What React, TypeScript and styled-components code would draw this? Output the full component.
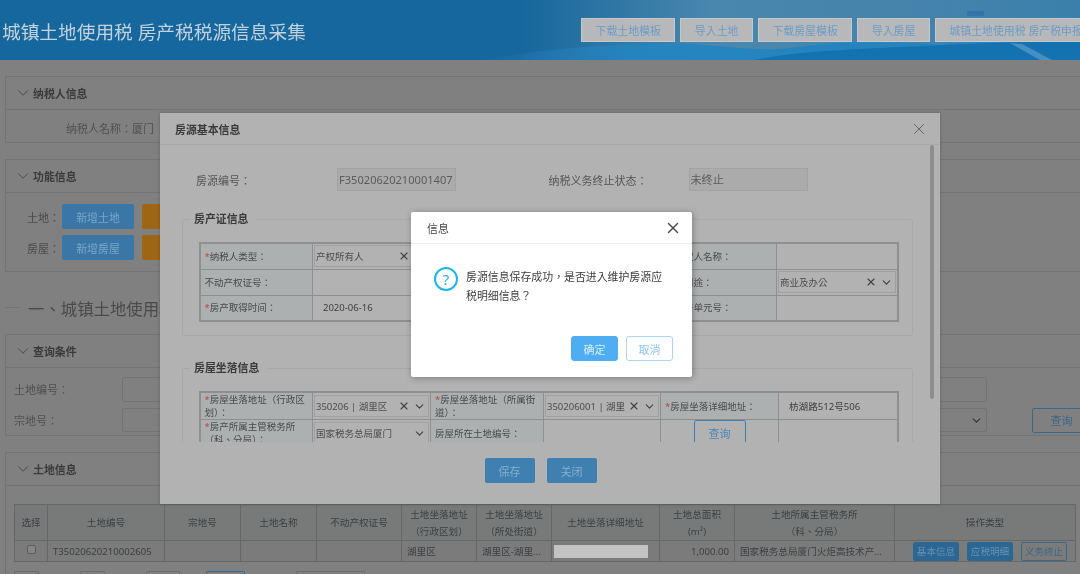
import React, { FC } from 'react';
import styled, { createGlobalStyle } from 'styled-components';
import { ChevronDown, X } from 'lucide-react';

const GlobalStyle = createGlobalStyle`
    html, body {
        margin: 0;
        padding: 0;
        width: 1080px;
        height: 574px;
        overflow: hidden;
        background: #808080;
        font-family: "Noto Sans", "Noto Sans CJK TC", sans-serif;
    }
    * {
        box-sizing: border-box;
    }
`;

const Screen = styled.div`
    position: relative;
    width: 1080px;
    height: 574px;
    overflow: hidden;
    background: #808080;
    filter: blur(0.35px);
`;

// ---------- top bar ----------

const TopBar = styled.header`
    position: relative;
    display: flex;
    align-items: center;
    height: 60px;
    overflow: hidden;
    background: linear-gradient(90deg, #16679d 0, #16679d 48%, #4a87ae 66%, #4583ab 85%, #3a80ac 100%);
`;

const WaveArt = styled.svg`
    position: absolute;
    left: 480px;
    top: 0;
`;

const AppTitle = styled.h1`
    position: relative;
    flex: 0 0 581px;
    margin: 0;
    padding-left: 2px;
    font-size: 18.7px;
    font-weight: 400;
    color: #c3d2dc;
    white-space: nowrap;
`;

const TopActions = styled.div`
    position: relative;
    display: flex;
    gap: 5px;
`;

const TopButton = styled.button`
    flex-shrink: 0;
    height: 24.5px;
    padding: 0 13.5px;
    border: 1px solid #c4c8cb;
    background: #b6b8ba;
    color: #6f9cc5;
    font: inherit;
    font-size: 10.9px;
    white-space: nowrap;
`;

// ---------- page behind the dialogs ----------

const Content = styled.main`
    padding-left: 5px;
    margin-right: -5px;
`;

const Panel = styled.section<{ $top: number; $height: number }>`
    margin-top: ${ p => p.$top }px;
    height: ${ p => p.$height }px;
    border: 1px solid #747474;
    background: #808080;
`;

const PanelHead = styled.div`
    display: flex;
    align-items: center;
    gap: 1.5px;
    height: 33px;
    padding-left: 7.5px;
    border-bottom: 1px solid #747474;
    color: #3a3a3a;
    font-size: 10.9px;
    font-weight: 700;
`;

const PayerLine = styled.div`
    padding: 10px 0 0 60px;
    color: #505050;
    font-size: 11px;
    white-space: nowrap;
`;

const FuncBody = styled.div`
    display: flex;
    flex-direction: column;
    gap: 6px;
    padding: 11px 0 0 21px;
`;

const FuncRow = styled.div`
    display: flex;
    align-items: center;
`;

const FuncLabel = styled.span`
    width: 35px;
    color: #4a4a4a;
    font-size: 11px;
    white-space: nowrap;
`;

const FuncButton = styled.button<{ $orange?: boolean }>`
    width: 72px;
    height: 25px;
    margin-left: ${ p => p.$orange ? '7.5px' : '0' };
    border: 0;
    border-radius: 2px;
    background: ${ p => p.$orange ? '#9e6614' : '#3a76a6' };
    color: #7aa7c8;
    font: inherit;
    font-size: 10.9px;
`;

const SectionTitle = styled.div`
    display: flex;
    align-items: center;
    gap: 8px;
    height: 62px;
    padding-top: 9px;
    color: #4a4a4a;
    font-size: 16.4px;
    white-space: nowrap;

    &::before {
        content: '';
        width: 15px;
        height: 1px;
        background: #747474;
    }
`;

const QueryBody = styled.div`
    display: flex;
    flex-direction: column;
    gap: 6px;
    padding: 9px 0 0 8px;
`;

const QueryRow = styled.div`
    display: flex;
    align-items: center;
    color: #4f4f4f;
    font-size: 11px;
`;

const QueryLabel = styled.span`
    width: 108px;
    flex-shrink: 0;
`;

const QueryInput = styled.div`
    flex-shrink: 0;
    display: flex;
    align-items: center;
    justify-content: flex-end;
    width: 864.5px;
    height: 24.5px;
    padding-right: 3px;
    border: 1px solid #747474;
    border-radius: 2px;
    color: #333;
`;

const QueryButton = styled.button`
    flex-shrink: 0;
    width: 60px;
    height: 25px;
    margin-left: 45px;
    border: 1px solid #3a678a;
    border-radius: 2px;
    background: transparent;
    color: #3a678a;
    font: inherit;
    font-size: 11px;
`;

const LandBody = styled.div`
    padding: 18px 0 0 8px;
`;

const LandTable = styled.table`
    width: 1061px;
    table-layout: fixed;
    border-collapse: collapse;
    border: 1px solid #656565;
    font-size: 9.6px;
    color: #3c4043;

    th, td {
        border: 1px solid #676767;
    }
    th {
        height: 36px;
        padding: 0 2px;
        background: #787a7a;
        font-weight: 400;
        line-height: 17px;
    }
    td {
        height: 21px;
        padding: 0 5px;
        background: #7b7b7b;
        white-space: nowrap;
        overflow: hidden;
        text-overflow: ellipsis;
    }
`;

const Check = styled.span`
    display: block;
    width: 9px;
    height: 9px;
    margin: 0 auto 3px;
    border: 1px solid #5d5d5d;
    border-radius: 2px;
    background: #858585;
`;

const MaskedAddress = styled.span`
    display: block;
    width: 94px;
    height: 13px;
    margin-left: -3px;
    background: #c3c3c3;
`;

const Amount = styled.td`
    && {
        text-align: right;
    }
`;

const RowActions = styled.div`
    display: flex;
    justify-content: flex-end;
    gap: 8px;
    margin-right: 3px;
`;

const RowButton = styled.button<{ $outline?: boolean }>`
    width: 46px;
    height: 19px;
    padding: 0;
    border: 1px solid ${ p => p.$outline ? '#3a678a' : '#2c6794' };
    border-radius: 2px;
    background: ${ p => p.$outline ? 'transparent' : '#2c6794' };
    color: ${ p => p.$outline ? '#3a678a' : '#6492b3' };
    font: inherit;
    font-size: 9.6px;
`;

const Pager = styled.div`
    display: flex;
    margin-top: 9px;
`;

const PagerBox = styled.span<{ $w: number; $gap: number; $active?: boolean }>`
    width: ${ p => p.$w }px;
    height: 24px;
    margin-left: ${ p => p.$gap }px;
    border: 1px solid ${ p => p.$active ? '#3a678a' : '#6c6c6c' };
    border-radius: 2px;
`;

// ---------- house source modal ----------

const Modal = styled.div`
    position: absolute;
    left: 160px;
    top: 113px;
    width: 780px;
    height: 391px;
    background: #b2b2b2;
    box-shadow: 0 0 3px rgba(0, 0, 0, 0.25);
`;

const ModalHead = styled.div`
    display: flex;
    align-items: center;
    justify-content: space-between;
    height: 32px;
    padding: 0 12px 0 15px;
    border-bottom: 1px solid #a9a9a9;
    color: #3a3a3a;
    font-size: 10.9px;
    font-weight: 700;
    svg {
        color: #4c4c4c;
    }
`;

const ModalBody = styled.div`
    height: 297px;
    padding-top: 23px;
    overflow: hidden;
`;

const ScrollThumb = styled.span`
    position: absolute;
    left: 770px;
    top: 32px;
    width: 4px;
    height: 254px;
    border-radius: 2px;
    background: #8d8d8d;
`;

const InfoRow = styled.div`
    display: flex;
    align-items: center;
    padding-left: 36px;
    color: #565656;
    font-size: 11px;
`;

const InfoLabel = styled.span<{ $w: number }>`
    width: ${ p => p.$w }px;
    flex-shrink: 0;
`;

const ReadOnly = styled.div`
    width: 119px;
    height: 23px;
    margin-right: 92.5px;
    padding-left: 1px;
    border: 1px solid #a3a3a3;
    background: #ababab;
    color: #5c5c5c;
    font-size: 11.1px;
    line-height: 21px;
    white-space: nowrap;
`;

const Group = styled.fieldset<{ $top: number; $height: number }>`
    width: 731px;
    height: ${ p => p.$height }px;
    margin: ${ p => p.$top }px 0 0 22px;
    padding: 14px 15.5px 0;
    border: 1px solid #a8a8a8;
    border-radius: 3px;
    min-width: 0;
`;

const GroupTitle = styled.legend`
    height: 18px;
    padding: 0 8px 0 4px;
    margin-left: -8.5px;
    color: #3a3a3a;
    font-size: 10.9px;
    font-weight: 700;
    line-height: 18px;
`;

const FormTable = styled.table`
    width: 698px;
    table-layout: fixed;
    border-collapse: collapse;
    border: 2px solid #8f8f8f;
    font-size: 9.5px;
    color: #4a4a4a;
    line-height: 13px;
`;

const Cell = styled.td<{ $label?: boolean; $center?: boolean }>`
    height: 26px;
    padding: ${ p => p.$label ? '0 4px' : p.$center ? '0 1px' : '1px' };
    border: 1px solid #8f8f8f;
    background: ${ p => p.$label ? '#acb0b1' : 'transparent' };
    text-align: ${ p => p.$center ? 'center' : 'left' };
    white-space: ${ p => p.$label ? 'normal' : 'nowrap' };
    overflow: hidden;
    vertical-align: ${ p => p.$center ? 'top' : 'middle' };
`;

const Star = styled.span`
    color: #b8433f;
`;

const SelectBox = styled.div`
    display: flex;
    align-items: center;
    gap: 3px;
    height: 22px;
    padding: 0 2px 0 1px;
    border: 1px solid #a0a0a0;
    color: #4c4c4c;
    svg {
        flex-shrink: 0;
        color: #404040;
    }
`;

const SelectText = styled.span`
    flex: 1;
    overflow: hidden;
`;

const PlainValue = styled.div`
    padding-left: 9px;
    color: #404040;
`;

const AddressValue = styled(PlainValue)`
    font-size: 9.6px;
`;

const CellButton = styled.button`
    display: block;
    width: 52px;
    height: 26px;
    margin: 0 auto;
    border: 1px solid #3f80b0;
    border-radius: 2px;
    background: transparent;
    color: #4a87b3;
    font: inherit;
    font-size: 11px;
`;

const ModalFoot = styled.div`
    display: flex;
    justify-content: center;
    gap: 12px;
    padding: 16px 19px 0 0;
`;

const FootButton = styled.button`
    width: 50px;
    height: 25px;
    border: 0;
    border-radius: 2px;
    background: #3f80b0;
    color: #86b0cf;
    font: inherit;
    font-size: 11px;
`;

// ---------- confirm dialog ----------

const Dialog = styled.div`
    position: absolute;
    left: 411px;
    top: 212px;
    display: flex;
    flex-direction: column;
    width: 281px;
    height: 165px;
    border-radius: 2px;
    background: #fff;
    box-shadow: 1px 1px 6px rgba(0, 0, 0, 0.3);
`;

const DialogHead = styled.div`
    display: flex;
    align-items: center;
    justify-content: space-between;
    height: 32px;
    padding: 0 10px 0 16px;
    border-bottom: 1px solid #eee;
    color: #444;
    font-size: 10.9px;
    svg {
        color: #4a4a52;
    }
`;

const DialogBody = styled.div`
    display: flex;
    gap: 8px;
    padding: 23px 0 0 23px;
`;

const QuestionIcon = styled.span`
    flex-shrink: 0;
    display: flex;
    align-items: center;
    justify-content: center;
    width: 24px;
    height: 24px;
    border: 2px solid #1cb8ec;
    border-radius: 50%;
    color: #1cb8ec;
    font-size: 15px;
`;

const DialogText = styled.p`
    width: 200px;
    margin: 0;
    color: #3c3c3c;
    font-size: 10.9px;
    line-height: 19px;
`;

const DialogActions = styled.div`
    display: flex;
    justify-content: flex-end;
    gap: 8px;
    margin-top: auto;
    padding: 0 19px 16px 0;
`;

const DialogButton = styled.button<{ $primary?: boolean }>`
    width: 47px;
    height: 25px;
    border: 1px solid ${ p => p.$primary ? '#4faef3' : '#a9d5f7' };
    border-radius: 3px;
    background: ${ p => p.$primary ? '#4faef3' : '#fff' };
    color: ${ p => p.$primary ? '#d8eefc' : '#8cc6f3' };
    font: inherit;
    font-size: 11px;
`;

// #################################################################################

const Caret: FC = () => <ChevronDown size={ 13 } strokeWidth={ 2 } />;
const Clear: FC = () => <X size={ 12 } strokeWidth={ 2.2 } />;
const PanelCaret: FC = () => <ChevronDown size={ 18 } strokeWidth={ 1 } />;

const Columns: FC<{ widths: number[] }> = ({ widths }) => (
    <colgroup>
        { widths.map( ( w, i ) => <col key={ i } width={ w } /> ) }
    </colgroup>
);

const App: FC = () => (
    <Screen>
        <GlobalStyle />
        <TopBar>
            <WaveArt width={ 600 } height={ 60 } viewBox='0 0 600 60'>
                <defs>
                    <linearGradient id='sea' x1='0' y1='0' x2='1' y2='0'>
                        <stop offset='0' stopColor='#2384c0' stopOpacity='0' />
                        <stop offset='0.25' stopColor='#2384c0' stopOpacity='0.9' />
                        <stop offset='1' stopColor='#2384c0' />
                    </linearGradient>
                </defs>
                <path d='M0 60 C60 50 130 42 210 44 C250 46 280 52 310 48 C360 40 400 42 460 44 L600 36 L600 60 Z' fill='url(#sea)' />
                <path d='M275 60 C310 52 360 50 420 47 C480 44 540 42 600 40 L600 60 Z' fill='#136fae' opacity='0.85' />
                <path d='M530 43 L542 44 L572 60 L560 60 Z' fill='#6ea9cf' opacity='0.55' />
                <rect x={ 487 } y={ 11 } width={ 17 } height={ 5 } fill='#2a70a8' opacity='0.7' />
            </WaveArt>
            <AppTitle>城镇土地使用税 房产税税源信息采集</AppTitle>
            <TopActions>
                <TopButton>下载土地模板</TopButton>
                <TopButton>导入土地</TopButton>
                <TopButton>下载房屋模板</TopButton>
                <TopButton>导入房屋</TopButton>
                <TopButton>城镇土地使用税 房产税申报</TopButton>
            </TopActions>
        </TopBar>

        <Content>
            <Panel $top={ 16 } $height={ 67 }>
                <PanelHead><PanelCaret />纳税人信息</PanelHead>
                <PayerLine>纳税人名称：厦门</PayerLine>
            </Panel>
            <Panel $top={ 16 } $height={ 113 }>
                <PanelHead><PanelCaret />功能信息</PanelHead>
                <FuncBody>
                    <FuncRow>
                        <FuncLabel>土地：</FuncLabel>
                        <FuncButton>新增土地</FuncButton>
                        <FuncButton $orange />
                    </FuncRow>
                    <FuncRow>
                        <FuncLabel>房屋：</FuncLabel>
                        <FuncButton>新增房屋</FuncButton>
                        <FuncButton $orange />
                    </FuncRow>
                </FuncBody>
            </Panel>
            <SectionTitle>一、城镇土地使用税</SectionTitle>
            <Panel $top={ 0 } $height={ 102 }>
                <PanelHead><PanelCaret />查询条件</PanelHead>
                <QueryBody>
                    <QueryRow>
                        <QueryLabel>土地编号：</QueryLabel>
                        <QueryInput />
                    </QueryRow>
                    <QueryRow>
                        <QueryLabel>宗地号：</QueryLabel>
                        <QueryInput><Caret /></QueryInput>
                        <QueryButton>查询</QueryButton>
                    </QueryRow>
                </QueryBody>
            </Panel>
            <Panel $top={ 16 } $height={ 160 }>
                <PanelHead><PanelCaret />土地信息</PanelHead>
                <LandBody>
                    <LandTable>
                        <Columns widths={ [ 33, 117, 76, 76, 85, 75, 75, 108, 75, 160, 181 ] } />
                        <thead>
                            <tr>
                                <th>选择</th>
                                <th>土地编号</th>
                                <th>宗地号</th>
                                <th>土地名称</th>
                                <th>不动产权证号</th>
                                <th>土地坐落地址<br />（行政区划）</th>
                                <th>土地坐落地址<br />（所处街道）</th>
                                <th>土地坐落详细地址</th>
                                <th>土地总面积<br />(m²)</th>
                                <th>土地所属主管税务所<br />（科、分局）</th>
                                <th>操作类型</th>
                            </tr>
                        </thead>
                        <tbody>
                            <tr>
                                <td><Check /></td>
                                <td>T35020620210002605</td>
                                <td />
                                <td />
                                <td />
                                <td>湖里区</td>
                                <td>湖里区-湖里...</td>
                                <td><MaskedAddress /></td>
                                <Amount>1,000.00</Amount>
                                <td>国家税务总局厦门火炬高技术产业...</td>
                                <td>
                                    <RowActions>
                                        <RowButton>基本信息</RowButton>
                                        <RowButton>应税明细</RowButton>
                                        <RowButton $outline>义务终止</RowButton>
                                    </RowActions>
                                </td>
                            </tr>
                        </tbody>
                    </LandTable>
                    <Pager>
                        <PagerBox $w={ 25 } $gap={ 0 } />
                        <PagerBox $w={ 25 } $gap={ 41 } />
                        <PagerBox $w={ 34 } $gap={ 41 } />
                        <PagerBox $w={ 39 } $gap={ 26 } $active />
                        <PagerBox $w={ 69 } $gap={ 51 } />
                    </Pager>
                </LandBody>
            </Panel>
        </Content>

        <Modal>
            <ModalHead>
                房源基本信息
                <X size={ 18 } strokeWidth={ 1 } />
            </ModalHead>
            <ModalBody>
                <InfoRow>
                    <InfoLabel $w={ 141 }>房源编号：</InfoLabel>
                    <ReadOnly>F35020620210001407</ReadOnly>
                    <InfoLabel $w={ 140 }>纳税义务终止状态：</InfoLabel>
                    <ReadOnly>未终止</ReadOnly>
                </InfoRow>

                <Group $top={ 19 } $height={ 126 }>
                    <GroupTitle>房产证信息</GroupTitle>
                    <FormTable>
                        <Columns widths={ [ 113, 118, 113, 117, 116, 121 ] } />
                        <tbody>
                            <tr>
                                <Cell $label><Star>*</Star>纳税人类型：</Cell>
                                <Cell><SelectBox><SelectText>产权所有人</SelectText><Clear /><Caret /></SelectBox></Cell>
                                <Cell $label />
                                <Cell />
                                <Cell $label>共有权人名称：</Cell>
                                <Cell />
                            </tr>
                            <tr>
                                <Cell $label>不动产权证号：</Cell>
                                <Cell />
                                <Cell $label />
                                <Cell />
                                <Cell $label>房屋用途：</Cell>
                                <Cell><SelectBox><SelectText>商业及办公</SelectText><Clear /><Caret /></SelectBox></Cell>
                            </tr>
                            <tr>
                                <Cell $label><Star>*</Star>房产取得时间：</Cell>
                                <Cell><PlainValue>2020-06-16</PlainValue></Cell>
                                <Cell $label />
                                <Cell />
                                <Cell $label>不动产单元号：</Cell>
                                <Cell />
                            </tr>
                        </tbody>
                    </FormTable>
                </Group>

                <Group $top={ 23 } $height={ 120 }>
                    <GroupTitle>房屋坐落信息</GroupTitle>
                    <FormTable>
                        <Columns widths={ [ 113, 118, 113, 117, 118, 119 ] } />
                        <tbody>
                            <tr>
                                <Cell $label><Star>*</Star>房屋坐落地址（行政区划）：</Cell>
                                <Cell><SelectBox><SelectText>350206 | 湖里区</SelectText><Clear /><Caret /></SelectBox></Cell>
                                <Cell $label><Star>*</Star>房屋坐落地址（所属街道）：</Cell>
                                <Cell><SelectBox><SelectText>350206001 | 湖里</SelectText><Clear /><Caret /></SelectBox></Cell>
                                <Cell $label><Star>*</Star>房屋坐落详细地址：</Cell>
                                <Cell><AddressValue>枋湖路512号506</AddressValue></Cell>
                            </tr>
                            <tr>
                                <Cell $label><Star>*</Star>房产所属主管税务所（科、分局）：</Cell>
                                <Cell><SelectBox><SelectText>国家税务总局厦门</SelectText><Caret /></SelectBox></Cell>
                                <Cell $label>房屋所在土地编号：</Cell>
                                <Cell />
                                <Cell $center><CellButton>查询</CellButton></Cell>
                                <Cell />
                            </tr>
                        </tbody>
                    </FormTable>
                </Group>
            </ModalBody>
            <ModalFoot>
                <FootButton>保存</FootButton>
                <FootButton>关闭</FootButton>
            </ModalFoot>
            <ScrollThumb />
        </Modal>

        <Dialog>
            <DialogHead>
                信息
                <X size={ 18 } strokeWidth={ 1.9 } />
            </DialogHead>
            <DialogBody>
                <QuestionIcon>?</QuestionIcon>
                <DialogText>房源信息保存成功，是否进入维护房源应税明细信息？</DialogText>
            </DialogBody>
            <DialogActions>
                <DialogButton $primary>确定</DialogButton>
                <DialogButton>取消</DialogButton>
            </DialogActions>
        </Dialog>
    </Screen>
);

export default App;
